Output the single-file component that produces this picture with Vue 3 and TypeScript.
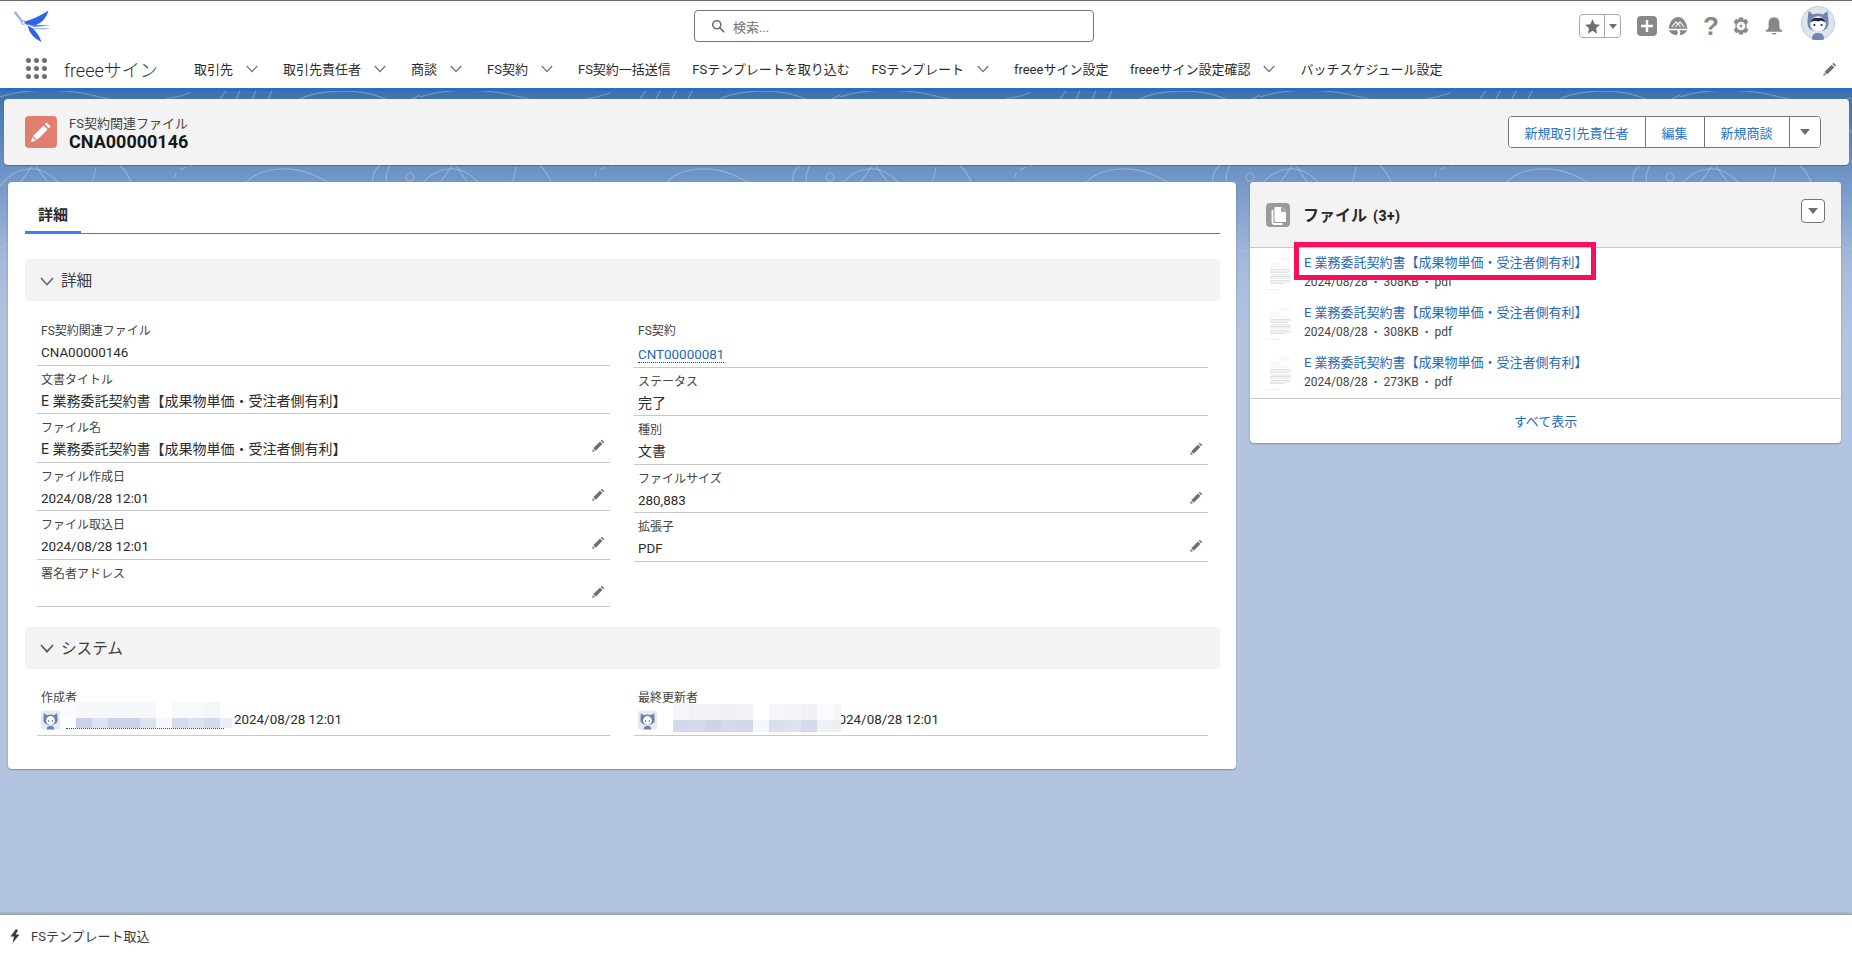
<script setup lang="ts">
interface NavItem { label: string; drop: boolean }
interface Field { label: string; value: string; edit: boolean; link?: boolean; num?: boolean; cls?: string }

const navItems: NavItem[] = [
  { label: '取引先', drop: true },
  { label: '取引先責任者', drop: true },
  { label: '商談', drop: true },
  { label: 'FS契約', drop: true },
  { label: 'FS契約一括送信', drop: false },
  { label: 'FSテンプレートを取り込む', drop: false },
  { label: 'FSテンプレート', drop: true },
  { label: 'freeeサイン設定', drop: false },
  { label: 'freeeサイン設定確認', drop: true },
  { label: 'バッチスケジュール設定', drop: false },
]

const docTitle = 'E 業務委託契約書【成果物単価・受注者側有利】'

const leftFields: Field[] = [
  { label: 'FS契約関連ファイル', value: 'CNA00000146', edit: false, num: true },
  { label: '文書タイトル', value: docTitle, edit: false },
  { label: 'ファイル名', value: docTitle, edit: true },
  { label: 'ファイル作成日', value: '2024/08/28 12:01', edit: true, num: true },
  { label: 'ファイル取込日', value: '2024/08/28 12:01', edit: true, num: true },
  { label: '署名者アドレス', value: '', edit: true, cls: 'short' },
]

const rightFields: Field[] = [
  { label: 'FS契約', value: 'CNT00000081', edit: false, link: true, num: true, cls: 'tall' },
  { label: 'ステータス', value: '完了', edit: false },
  { label: '種別', value: '文書', edit: true },
  { label: 'ファイルサイズ', value: '280,883', edit: true, num: true },
  { label: '拡張子', value: 'PDF', edit: true, num: true },
]

const files = [
  { meta: ['2024/08/28', '308KB', 'pdf'] },
  { meta: ['2024/08/28', '308KB', 'pdf'] },
  { meta: ['2024/08/28', '273KB', 'pdf'] },
]

const mosaicLeft = [
  '#fbfbfd', '#f8f8fb', '#f7f8fb', '#f7f8fb', '#f7f8fb', '#f8f8fb', '#ffffff', '#f8f9fb', '#f8f9fb', '#f5f6fa', '#ffffff',
  '#ffffff', '#c9d2e8', '#dde2f0', '#c9d2e8', '#c9d2e8', '#dde2f0', '#f7f8fb', '#d5dbec', '#dde2f0', '#d3daeb', '#ecEEf6',
]
const mosaicRight = [
  '#f5f6fa', '#f1f2f7', '#f1f2f7', '#f0f1f6', '#f1f2f7', '#ffffff', '#f5f6fa', '#f4f5f9', '#f0f1f6', '#fbfbfd', '#f6f6f8',
  '#d0d8e9', '#d3daea', '#ccd4e6', '#d3daea', '#d0d8e9', '#f6f7fb', '#d7deec', '#dde2ef', '#d3daea', '#eff1f6', '#eeeeef',
]
</script>

<template>
  <div class="app">
    <header class="top">
      <div class="row-one">
        <svg class="logo" viewBox="0 0 38 32" aria-hidden="true">
          <path d="M0.6 2.4 Q2 0.8 3.4 2 L10 11 L8.6 12.6 Z" fill="#8fb4f5" />
          <circle cx="10.4" cy="12.6" r="1.8" fill="none" stroke="#6f8fd6" stroke-width="0.9" />
          <path d="M11.5 11.5 Q24 8 35.5 0.4 Q33 11 22 15.5 L13 14.5 Z" fill="#2f62ea" />
          <path d="M15 14.4 L38 15.6 L21 17 Z" fill="#5d83ea" />
          <path d="M18 18 L37.5 18 Q28 21 18 18 Z" fill="#9dbaf4" />
          <path d="M14.5 15.5 Q24 19 28.6 32 Q17 27 14.5 15.5 Z" fill="#2f62ea" />
        </svg>
        <div class="search">
          <svg class="search-icon" viewBox="0 0 16 16" aria-hidden="true">
            <circle cx="6.6" cy="6.6" r="4.6" fill="none" stroke="#706e6b" stroke-width="1.8" />
            <path d="M10 10 L14.4 14.4" stroke="#706e6b" stroke-width="2" stroke-linecap="round" />
          </svg>
          <span class="search-text">検索...</span>
        </div>
        <div class="actions">
          <div class="fav">
            <span class="fav-star">
              <svg viewBox="0 0 20 20" aria-hidden="true"><path d="M10 1.6 L12.6 7.4 L18.8 8 L14.1 12.2 L15.5 18.4 L10 15.1 L4.5 18.4 L5.9 12.2 L1.2 8 L7.4 7.4 Z" fill="#706e6b" /></svg>
            </span>
            <span class="fav-caret"><i class="caret"></i></span>
          </div>
          <span class="plus">
            <svg viewBox="0 0 20 20" aria-hidden="true"><path d="M10 4 V16 M4 10 H16" stroke="#fff" stroke-width="2.4" /></svg>
          </span>
          <svg class="trail" viewBox="0 0 20 20" aria-hidden="true">
            <path d="M10 1 C5.5 1 2.4 5 1 10.6 L0.6 12.8 H19.4 L19 10.6 C17.6 5 14.5 1 10 1 Z" fill="#8a8886" />
            <path d="M3.8 11 L8 5.8 L10 8.2 L12 5.8 L16.2 11 M7.4 11 L10 8 L12.6 11" fill="none" stroke="#fff" stroke-width="1.1" />
            <path d="M0.8 14.2 H8.8 L10 16.2 L8.6 19.2 Q3 18.6 0.8 14.2 Z M11.6 14.2 H19.2 Q17 18.6 11.6 19.2 L12.4 16.6 Z" fill="#8a8886" />
          </svg>
          <span class="help">?</span>
          <svg class="gear" viewBox="0 0 20 20" aria-hidden="true">
            <path d="M7.8 0.6 H12.2 L12.9 3.3 L15.4 2 L18.3 5.9 L16.2 7.8 L16.2 12.2 L18.3 14.1 L15.4 18 L12.9 16.7 L12.2 19.4 H7.8 L7.1 16.7 L4.6 18 L1.7 14.1 L3.8 12.2 L3.8 7.8 L1.7 5.9 L4.6 2 L7.1 3.3 Z" fill="#8a8886" />
            <circle cx="10" cy="10" r="4.8" fill="#fff" />
            <path d="M11.2 6 L7.8 10.8 H10 L8.9 14 L12.3 9.2 H10.1 Z" fill="#8a8886" />
          </svg>
          <svg class="bell" viewBox="0 0 20 20" aria-hidden="true">
            <path d="M10 1.2 C13.8 1.2 15.4 4 15.4 7.4 V11.4 Q15.6 13.6 18.2 14.4 V15.8 H1.8 V14.4 Q4.4 13.6 4.6 11.4 V7.4 C4.6 4 6.2 1.2 10 1.2 Z" fill="#8a8886" />
            <path d="M7.4 16.9 H12.6 Q12 18.6 10 18.6 Q8 18.6 7.4 16.9 Z" fill="#8a8886" />
          </svg>
          <svg class="avatar" viewBox="0 0 34 34" aria-hidden="true">
            <circle cx="17" cy="17" r="16.6" fill="#dde4f0" stroke="#b9c1cd" stroke-width="0.8" />
            <path d="M7.5 5 L12 8.4 Q17 6.8 22 8.4 L26.5 5 L27.5 15 Q28.5 25 17 25.5 Q5.5 25 6.5 15 Z" fill="#7086ad" />
            <circle cx="17" cy="18" r="7.8" fill="#fff" />
            <path d="M9.4 16.6 Q11 10.4 17 12 Q23 10.4 24.6 16.6 Q21 13.6 17 15.4 Q13 13.6 9.4 16.6 Z" fill="#1f2b44" />
            <circle cx="13.4" cy="19" r="1.1" fill="#1f2b44" />
            <circle cx="20.6" cy="19" r="1.1" fill="#1f2b44" />
            <path d="M11 33.4 Q10.6 27 17 27 Q23.4 27 23 33.4 Q17 34.4 11 33.4 Z" fill="#7086ad" />
          </svg>
        </div>
      </div>
      <nav class="row-two">
        <span class="apps"><i v-for="n in 9" :key="n"></i></span>
        <span class="app-name">freeeサイン</span>
        <ul class="nav-list">
          <li v-for="item in navItems" :key="item.label" class="nav-item" :class="{ plain: !item.drop }">
            <span>{{ item.label }}</span>
            <svg v-if="item.drop" class="nav-chev" viewBox="0 0 12 8" aria-hidden="true"><path d="M0.8 1 L6 6.6 L11.2 1" fill="none" stroke="#706e6b" stroke-width="1.2" /></svg>
          </li>
        </ul>
        <svg class="nav-pencil" viewBox="0 0 14 14" aria-hidden="true">
          <path d="M10.6 0.8 L13.2 3.4 L12 4.6 L9.4 2 Z M8.6 2.8 L11.2 5.4 L4 12.6 L1.4 10 Z M0.9 10.9 L3.1 13.1 L0.2 13.8 Z" fill="#706e6b" />
        </svg>
      </nav>
    </header>

    <main class="stage">
      <svg class="texture" aria-hidden="true">
        <defs>
          <pattern id="contours" width="420" height="150" patternUnits="userSpaceOnUse">
            <g fill="none" stroke="#fff" stroke-width="1.2" stroke-opacity="0.26">
              <path d="M-6 104 C14 70 44 72 60 94 S90 112 96 76" />
              <path d="M20 92 L34 72 L48 92" />
              <path d="M118 72 C132 86 136 100 134 120" />
              <path d="M172 96 L176 82 Q182 76 200 72" stroke-dasharray="5 5" />
              <path d="M242 100 C250 76 290 72 318 86 S350 100 362 100" />
              <path d="M380 74 C368 84 372 98 382 104 M392 72 C382 84 386 96 396 104" />
              <circle cx="410" cy="86" r="4" />
              <path d="M0 6 C30 -4 70 -2 100 6 S160 12 190 2" />
              <path d="M220 8 l6 -8 M236 8 l4 -8 M252 8 l4 -8 M268 8 l4 -8" />
              <path d="M300 8 C320 -2 360 -2 380 6 S410 10 420 4" />
              <path d="M60 30 C90 10 150 20 170 40 S220 60 260 40" />
              <path d="M290 50 q14 -18 30 0 t-14 24 q-24 0 -16 -24 Z" />
              <path d="M20 130 C60 110 120 120 150 144" />
              <path d="M200 146 C240 120 320 118 380 140" />
            </g>
          </pattern>
        </defs>
        <rect width="100%" height="100%" fill="url(#contours)" />
      </svg>

      <section class="page-head">
        <span class="head-icon">
          <svg viewBox="0 0 32 32" aria-hidden="true">
            <path d="M21.6 6.4 L25.6 10.4 L23.8 12.2 L19.8 8.2 Z M18.6 9.4 L22.6 13.4 L12 24 L8 20 Z M7.2 21.2 L10.8 24.8 L6 26 Z" fill="#fff" />
          </svg>
        </span>
        <div class="head-text">
          <div class="head-kicker">FS契約関連ファイル</div>
          <div class="head-title">CNA00000146</div>
        </div>
        <div class="btn-group">
          <button class="btn w-a" type="button">新規取引先責任者</button>
          <button class="btn w-b" type="button">編集</button>
          <button class="btn w-c" type="button">新規商談</button>
          <button class="btn w-d" type="button"><i class="caret"></i></button>
        </div>
      </section>

      <div class="columns">
        <section class="card detail">
          <div class="tabs"><span class="tab">詳細</span></div>

          <div class="sec-head">
            <svg class="sec-chev" viewBox="0 0 14 9" aria-hidden="true"><path d="M1 1 L7 7.6 L13 1" fill="none" stroke="#5c5c5c" stroke-width="1.4" /></svg>
            <span>詳細</span>
          </div>
          <div class="fields">
            <div class="col">
              <div v-for="f in leftFields" :key="f.label" class="field" :class="f.cls">
                <div class="f-label">{{ f.label }}</div>
                <div class="f-value" :class="{ num: f.num }">{{ f.value }}</div>
                <svg v-if="f.edit" class="f-pencil" viewBox="0 0 14 14" aria-hidden="true">
                  <path d="M10.6 0.8 L13.2 3.4 L12 4.6 L9.4 2 Z M8.6 2.8 L11.2 5.4 L4 12.6 L1.4 10 Z M0.9 10.9 L3.1 13.1 L0.2 13.8 Z" fill="#706e6b" />
                </svg>
              </div>
            </div>
            <div class="col right">
              <div v-for="f in rightFields" :key="f.label" class="field" :class="f.cls">
                <div class="f-label">{{ f.label }}</div>
                <div class="f-value" :class="{ num: f.num, link: f.link }"><span>{{ f.value }}</span></div>
                <svg v-if="f.edit" class="f-pencil" viewBox="0 0 14 14" aria-hidden="true">
                  <path d="M10.6 0.8 L13.2 3.4 L12 4.6 L9.4 2 Z M8.6 2.8 L11.2 5.4 L4 12.6 L1.4 10 Z M0.9 10.9 L3.1 13.1 L0.2 13.8 Z" fill="#706e6b" />
                </svg>
              </div>
            </div>
          </div>

          <div class="sec-head second">
            <svg class="sec-chev" viewBox="0 0 14 9" aria-hidden="true"><path d="M1 1 L7 7.6 L13 1" fill="none" stroke="#5c5c5c" stroke-width="1.8" /></svg>
            <span>システム</span>
          </div>
          <div class="fields sys">
            <div class="col">
              <div class="field sysf">
                <div class="f-label">作成者</div>
                <div class="f-value num sys-value">
                  <svg class="mini" viewBox="0 0 20 20" aria-hidden="true">
                    <rect width="20" height="20" rx="3" fill="#e4e9f2" />
                    <path d="M3 3 L6.5 5 Q10 3.6 13.5 5 L17 3 L17.5 10 Q17.5 15 10 15 Q2.5 15 2.5 10 Z" fill="#6c83ab" />
                    <circle cx="10" cy="10.5" r="4.6" fill="#fff" />
                    <circle cx="8" cy="11" r="0.7" fill="#27344f" /><circle cx="12" cy="11" r="0.7" fill="#27344f" />
                    <path d="M6 20 Q6 16 10 16 Q14 16 14 20 Z" fill="#6c83ab" />
                  </svg>
                  <span class="who dotted"></span>
                  <span class="stamp">2024/08/28 12:01</span>
                </div>
                <div class="mosaic m-left">
                  <i v-for="(c, i) in mosaicLeft" :key="i" :style="{ background: c }"></i>
                </div>
              </div>
            </div>
            <div class="col">
              <div class="field sysf">
                <div class="f-label">最終更新者</div>
                <div class="f-value num sys-value">
                  <svg class="mini" viewBox="0 0 20 20" aria-hidden="true">
                    <rect width="20" height="20" rx="3" fill="#e4e9f2" />
                    <path d="M3 3 L6.5 5 Q10 3.6 13.5 5 L17 3 L17.5 10 Q17.5 15 10 15 Q2.5 15 2.5 10 Z" fill="#6c83ab" />
                    <circle cx="10" cy="10.5" r="4.6" fill="#fff" />
                    <circle cx="8" cy="11" r="0.7" fill="#27344f" /><circle cx="12" cy="11" r="0.7" fill="#27344f" />
                    <path d="M6 20 Q6 16 10 16 Q14 16 14 20 Z" fill="#6c83ab" />
                  </svg>
                  <span class="who"></span>
                  <span class="stamp">2024/08/28 12:01</span>
                </div>
                <div class="mosaic m-right">
                  <i v-for="(c, i) in mosaicRight" :key="i" :style="{ background: c }"></i>
                </div>
              </div>
            </div>
          </div>
        </section>

        <aside class="card side">
          <div class="side-head">
            <span class="side-icon">
              <svg viewBox="0 0 24 24" aria-hidden="true">
                <path d="M9.5 4 H16 L20 8 V18 Q20 19 19 19 H9.5 Q8.5 19 8.5 18 V5 Q8.5 4 9.5 4 Z" fill="#fff" />
                <path d="M15.6 4 V8.4 H20" fill="#9a9a9a" stroke="#9a9a9a" stroke-width="0.8" />
                <path d="M6.5 7 V19.5 Q6.5 21 8 21 H16.5" fill="none" stroke="#fff" stroke-width="1.8" />
              </svg>
            </span>
            <span class="side-title">ファイル <b>(3+)</b></span>
            <button class="side-menu" type="button"><i class="caret"></i></button>
          </div>
          <ul class="file-list">
            <li v-for="(f, i) in files" :key="i" class="file">
              <svg class="thumb" viewBox="0 0 26 33" aria-hidden="true">
                <g stroke="#e0e0e0" stroke-width="0.5">
                  <path d="M13 1 H23 M15 3 H25" />
                  <path d="M4 6 H14 M4 8 H12 M4 10 H22" />
                </g>
                <g stroke="#cfcfcf" stroke-width="0.6">
                  <path d="M4 12.5 H24 M4 14 H25 M4 15.5 H22 M5 18 H25 M4 19.5 H24 M4 21 H25 M4 23.5 H24 M4 25 H25 M4 26.5 H19" />
                </g>
                <path d="M0 32.5 H13" stroke="#e4e4e4" stroke-width="0.6" />
              </svg>
              <div class="file-body">
                <div class="file-title">{{ docTitle }}</div>
                <div class="file-meta">
                  <span>{{ f.meta[0] }}</span><em>•</em><span>{{ f.meta[1] }}</span><em>•</em><span>{{ f.meta[2] }}</span>
                </div>
              </div>
            </li>
          </ul>
          <div class="side-foot">すべて表示</div>
          <div class="highlight"></div>
        </aside>
      </div>
    </main>

    <footer class="util">
      <svg class="bolt" viewBox="0 0 12 14" aria-hidden="true"><path d="M7 0 L1.4 7.6 H5 L3.6 14 L10.6 5.6 H6.6 L9 1.2 Z" fill="#3a3a3a" /></svg>
      <span>FSテンプレート取込</span>
    </footer>
  </div>
</template>

<style>
html, body { margin: 0; padding: 0; background: #fff; }
</style>

<style scoped>
.app {
  height: 956px;
  display: flex;
  flex-direction: column;
  overflow: hidden;
  font-family: Roboto, "Noto Sans CJK JP", sans-serif;
  color: #2b2b2b;
}
.top {
  background: #fff;
  border-top: 1px solid #6b6b6b;
  border-bottom: 3px solid #2a6cc6;
  flex: none;
}
.row-one {
  height: 50px;
  display: grid;
  grid-template-columns: 694px 400px 1fr;
  align-items: start;
}
.logo { width: 38px; height: 32px; margin: 9px 0 0 13px; }
.search {
  height: 32px;
  margin-top: 9px;
  box-sizing: border-box;
  border: 1px solid #747474;
  border-radius: 4px;
  display: flex;
  align-items: center;
  padding-left: 16px;
  gap: 8px;
}
.search-icon { width: 14px; height: 14px; }
.search-text { font-size: 13px; color: #747474; }
.actions {
  position: relative;
  display: flex;
  align-items: flex-start;
  justify-content: flex-end;
  padding-right: 17px;
}
.fav {
  display: flex;
  width: 42px;
  height: 24px;
  margin-top: 13px;
  box-sizing: border-box;
  border: 1px solid #a8a8a8;
  border-radius: 4px;
}
.fav-star {
  width: 24px;
  border-right: 1px solid #a8a8a8;
  display: flex;
  align-items: center;
  justify-content: center;
}
.fav-star svg { width: 17px; height: 17px; }
.fav-caret { flex: 1; display: flex; align-items: center; justify-content: center; }
.caret {
  display: block;
  width: 0;
  height: 0;
  border-left: 5px solid transparent;
  border-right: 5px solid transparent;
  border-top: 6px solid #706e6b;
}
.fav-caret .caret { border-left-width: 4px; border-right-width: 4px; border-top-width: 5px; }
.plus {
  width: 20px;
  height: 20px;
  margin: 15px 0 0 16px;
  background: #8a8886;
  border-radius: 4px;
  display: block;
}
.plus svg { display: block; width: 20px; height: 20px; }
.trail { width: 20px; height: 20px; margin: 15px 0 0 11px; }
.help {
  width: 14px;
  margin: 11px 0 0 15px;
  font: 700 26px/28px "Liberation Sans", sans-serif;
  color: #8a8886;
  text-align: center;
}
.gear { width: 18px; height: 18px; margin: 16px 0 0 15px; }
.bell { width: 20px; height: 20px; margin: 15px 0 0 14px; }
.avatar { width: 34px; height: 34px; margin: 5px 0 0 17px; }

.row-two {
  height: 37px;
  box-sizing: border-box;
  padding-bottom: 2px;
  display: flex;
  align-items: center;
  position: relative;
}
.apps {
  display: grid;
  grid-template-columns: repeat(3, 5px);
  gap: 3px;
  width: 21px;
  margin-left: 26px;
}
.apps i { display: block; width: 5px; height: 5px; border-radius: 50%; background: #706e6b; }
.app-name { font-size: 18px; margin-left: 17px; width: 130px; flex: none; font-weight: 300; }
.nav-list {
  list-style: none;
  margin: 0;
  padding: 0;
  display: flex;
  flex: 1;
  font-size: 13px;
}
.nav-item { display: flex; align-items: center; margin-right: 25px; }
.nav-item.plain { margin-right: 21.5px; }
.nav-chev { width: 12px; height: 8px; margin-left: 13px; }
.nav-pencil { width: 14px; height: 14px; margin-right: 15px; }

.stage {
  flex: 1;
  position: relative;
  padding: 8px 3px 0 4px;
  background: linear-gradient(180deg, #3f72aa 0, #7196c6 85px, #a5b9da 170px, #b3c4e0 240px, #b3c4e0 100%);
}
.texture {
  position: absolute;
  left: 0;
  top: 0;
  width: 100%;
  height: 240px;
  -webkit-mask-image: linear-gradient(180deg, #000 0, #000 90px, transparent 210px);
  mask-image: linear-gradient(180deg, #000 0, #000 90px, transparent 210px);
}
.page-head {
  position: relative;
  height: 66px;
  box-sizing: border-box;
  background: #f3f3f3;
  border-radius: 4px;
  box-shadow: 0 1px 1px rgba(0, 0, 0, 0.28);
  display: flex;
  align-items: center;
  padding: 0 28.5px 0 21px;
}
.head-icon { width: 32px; height: 32px; border-radius: 4px; background: #e27e70; flex: none; }
.head-icon svg { display: block; width: 32px; height: 32px; }
.head-text { margin-left: 12px; flex: 1; }
.head-kicker { font-size: 13px; line-height: 17px; color: #444; padding-top: 1px; }
.head-title { font-size: 18px; line-height: 19px; font-weight: 700; color: #181818; }
.btn-group {
  display: flex;
  height: 32px;
  box-sizing: border-box;
  border: 1px solid #747474;
  border-radius: 4px;
  background: #fff;
  overflow: hidden;
}
.btn {
  border: 0;
  border-left: 1px solid #747474;
  background: #fff;
  font: inherit;
  font-size: 13px;
  color: #2a73c9;
  padding: 0;
  display: flex;
  align-items: center;
  justify-content: center;
}
.w-a { width: 136px; border-left: 0; }
.w-b { width: 59px; }
.w-c { width: 85px; }
.w-d { width: 31px; }

.columns {
  position: relative;
  display: grid;
  grid-template-columns: 1228px 591px;
  gap: 14px;
  margin: 17px 0 0 4px;
  align-items: start;
}
.card {
  background: #fff;
  border-radius: 4px;
  box-shadow: 0 1px 2px rgba(0, 0, 0, 0.28);
}
.detail { height: 587px; box-sizing: border-box; padding: 0 16px 0 17px; }
.tabs { height: 52px; box-sizing: border-box; border-bottom: 1px solid #747474; display: flex; }
.tab {
  width: 56px;
  height: 52px;
  box-sizing: border-box;
  padding-top: 23px;
  text-align: center;
  font-size: 15px;
  line-height: 20px;
  font-weight: 700;
  border-bottom: 3px solid #3b82ef;
}
.sec-head {
  margin-top: 25px;
  height: 42px;
  box-sizing: border-box;
  padding-bottom: 2px;
  background: #f3f3f3;
  border-radius: 4px;
  display: flex;
  align-items: center;
  padding-left: 15px;
  font-size: 15.6px;
  color: #3e3e3c;
}
.sec-head.second { margin-top: 20px; }
.sec-chev { width: 14px; height: 9px; margin: 4px 7px 0 0; }
.fields {
  display: grid;
  grid-template-columns: 573px 574px;
  gap: 24px;
  margin: 16px 0 0 12px;
}
.field {
  position: relative;
  box-sizing: border-box;
  height: 48.6px;
  border-bottom: 1px solid #c9c9c9;
  padding: 5px 0 0 4px;
}
.field.tall { height: 50.5px; }
.field.short { height: 47px; }
.f-label { height: 18px; font-size: 12px; line-height: 18px; color: #444; }
.f-value { height: 24px; font-size: 14px; line-height: 24px; white-space: nowrap; }
.f-value.num { font-size: 13.4px; padding-top: 1px; box-sizing: border-box; height: 25px; }
.f-value.link span {
  color: #2468b8;
  border-bottom: 1px dotted #1b4f9c;
}
.f-value.link { padding-top: 3px; }
.f-pencil { position: absolute; right: 5px; top: 25px; width: 13px; height: 13px; }
.col.right .f-pencil { top: 26px; }
.fields.sys { margin-top: 15px; }
.field.sysf { height: 52px; }
.sys-value { display: flex; align-items: center; height: 26px; }
.mini { width: 19px; height: 20px; flex: none; }
.who { width: 158px; height: 19px; margin: 0 10px 0 6px; box-sizing: border-box; flex: none; }
.who.dotted { border-bottom: 1px dotted #1b4f9c; }
.mosaic {
  position: absolute;
  display: grid;
}
.mosaic i { display: block; }
.m-left { left: 23px; top: 18px; grid-template-columns: repeat(10, 16px) 12px; grid-template-rows: 16px 10px; }
.m-right { left: 39px; top: 20px; grid-template-columns: repeat(10, 16px) 8px; grid-template-rows: 16px 12px; }

.side { position: relative; height: 261px; }
.side-head {
  height: 66px;
  box-sizing: border-box;
  background: #f3f3f3;
  border-radius: 4px 4px 0 0;
  border-bottom: 1px solid #c9c9c9;
  display: flex;
  align-items: flex-start;
  padding-left: 16px;
}
.side-icon { width: 24px; height: 24px; margin-top: 21px; background: #9a9a9a; border-radius: 4px; flex: none; }
.side-icon svg { display: block; width: 24px; height: 24px; }
.side-title { margin: 22px 0 0 13px; flex: 1; font-size: 16px; line-height: 24px; font-weight: 700; }
.side-title b { font-size: 14px; margin-left: 2px; letter-spacing: 0.5px; }
.side-menu {
  width: 24px;
  height: 24px;
  margin: 17px 16px 0 0;
  box-sizing: border-box;
  border: 1px solid #747474;
  border-radius: 4px;
  background: #fff;
  display: flex;
  align-items: center;
  justify-content: center;
  padding: 0;
}
.file-list {
  list-style: none;
  margin: 0;
  padding: 0;
  height: 151px;
  box-sizing: border-box;
  border-bottom: 1px solid #c9c9c9;
}
.file { height: 50px; display: flex; padding-left: 16px; box-sizing: border-box; padding-top: 5px; }
.thumb { width: 26px; height: 33px; flex: none; margin-top: 4px; }
.file-body { margin-left: 12px; }
.file-title { font-size: 13px; line-height: 20px; color: #2468b8; white-space: nowrap; }
.file-meta { font-size: 12px; line-height: 19px; color: #444; display: flex; }
.file-meta em { font-style: normal; margin: 0 6px; font-size: 11px; }
.side-foot { height: 42px; display: flex; align-items: center; justify-content: center; font-size: 13px; color: #2468b8; }
.highlight {
  position: absolute;
  left: 44px;
  top: 60px;
  width: 302px;
  height: 38px;
  box-sizing: border-box;
  border: 5px solid #f90d5e;
}

.util {
  height: 42px;
  flex: none;
  box-sizing: border-box;
  background: #fff;
  border-top: 1px solid #a0a8b8;
  box-shadow: 0 -1px 2px rgba(0, 0, 0, 0.2);
  position: relative;
  display: flex;
  align-items: center;
  padding-left: 9px;
  font-size: 13px;
  color: #3a3a3a;
}
.bolt { width: 12px; height: 14px; margin-right: 10px; }
</style>
